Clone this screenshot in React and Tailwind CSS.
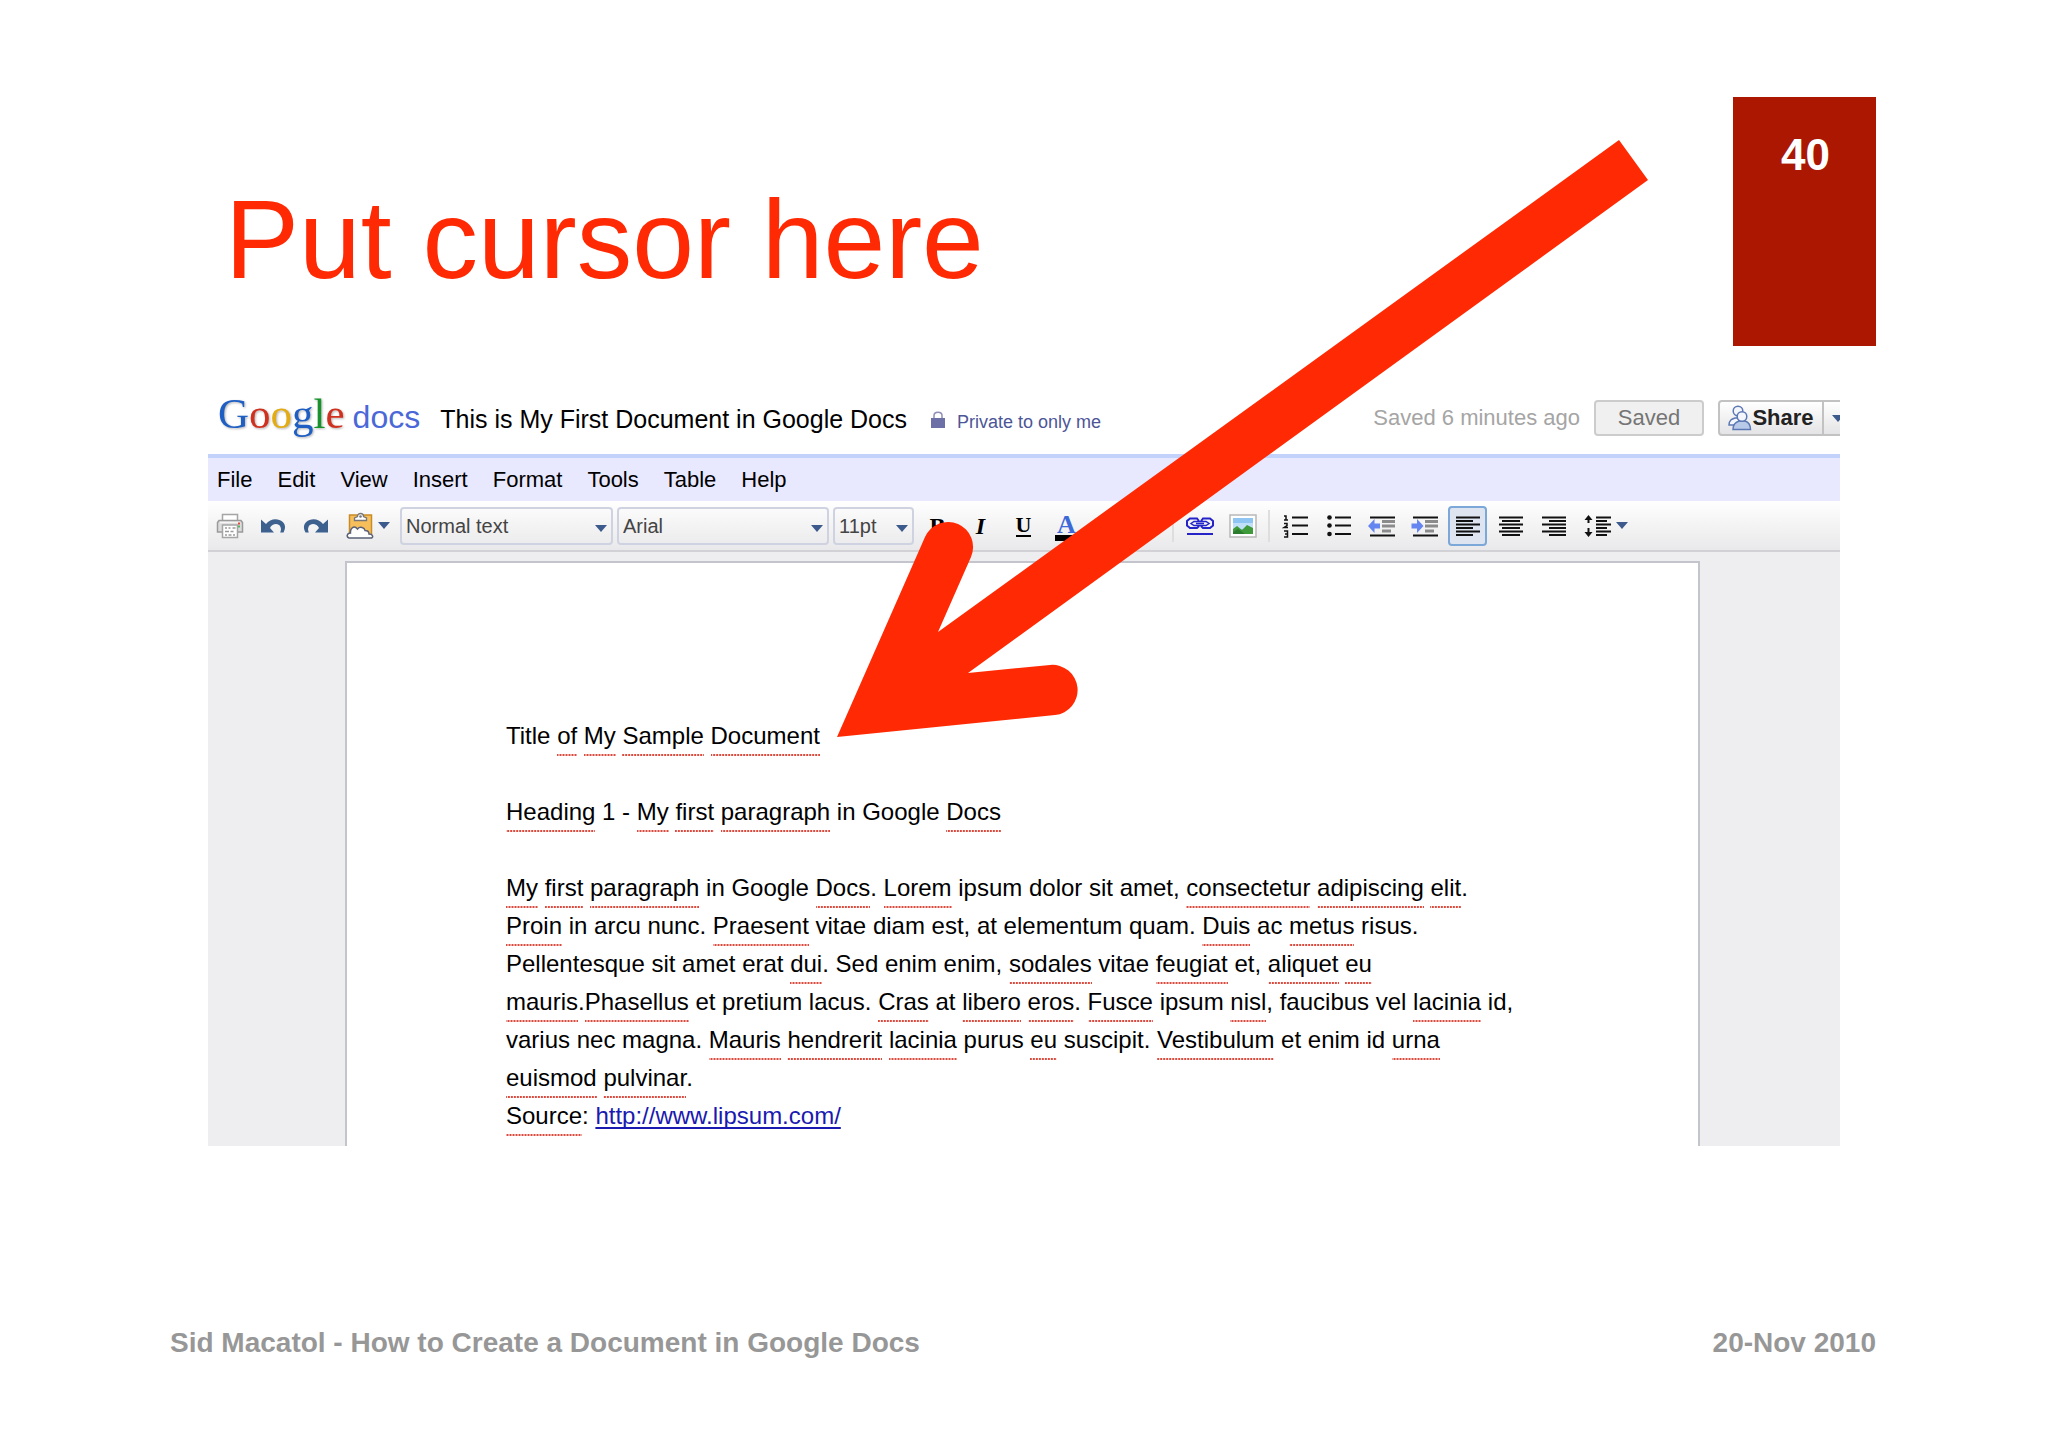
import React, { useState } from "react";

const MENUS = ["File", "Edit", "View", "Insert", "Format", "Tools", "Table", "Help"];

const LOGO = [
  ["G", "text-[#1f5fc4]"],
  ["o", "text-[#d0311f]"],
  ["o", "text-[#e3ac14]"],
  ["g", "text-[#1f5fc4]"],
  ["l", "text-[#17922c]"],
  ["e", "text-[#d0311f]"],
];

// Words wrapped in asterisks are flagged by the spell checker.
const LINES = [
  "Title *of* *My* *Sample* *Document*",
  "",
  "*Heading* 1 - *My* *first* *paragraph* in Google *Docs*",
  "",
  "*My* *first* *paragraph* in Google *Docs*. *Lorem* ipsum dolor sit amet, *consectetur* *adipiscing* *elit*.",
  "*Proin* in arcu nunc. *Praesent* vitae diam est, at elementum quam. *Duis* ac *metus* risus.",
  "Pellentesque sit amet erat *dui*. Sed enim enim, *sodales* vitae *feugiat* et, *aliquet* *eu*",
  "*mauris*.*Phasellus* et pretium lacus. *Cras* at *libero* *eros*. *Fusce* ipsum *nisl*, faucibus vel *lacinia* id,",
  "varius nec magna. *Mauris* *hendrerit* *lacinia* purus *eu* suscipit. *Vestibulum* et enim id *urna*",
  "*euismod* *pulvinar*.",
];

const Flagged = ({ children }) => (
  <span className="bg-[linear-gradient(90deg,#dc4a3e_2px,transparent_2px)] bg-[length:3px_2px] bg-bottom bg-repeat-x pb-[7px]">
    {children}
  </span>
);

const Line = ({ text }) => (
  <p className="h-[38px] whitespace-nowrap">
    {text.split("*").map((part, i) =>
      i % 2 === 1 ? <Flagged key={i}>{part}</Flagged> : part
    )}
  </p>
);

const Caret = ({ className = "" }) => (
  <svg viewBox="0 0 12 7" className={`h-[7px] w-3 shrink-0 ${className}`} fill="#3d5a8c" aria-hidden="true">
    <path d="M0 0h12L6 7z" />
  </svg>
);

const Icon = ({ children }) => (
  <svg viewBox="0 0 28 28" className="h-7 w-7 shrink-0" fill="none" aria-hidden="true">
    {children}
  </svg>
);

const PrintIcon = () => (
  <Icon>
    <path d="M6.500 9V2.500h15V9" fill="#fff" stroke="#a5a5a5" strokeWidth="1.500" />
    <path d="M3 8.500h22l1.500 2V20h-25v-9.500z" fill="#dcdcdc" stroke="#9a9a9a" strokeWidth="1.500" />
    <path d="M4 10.500h20" stroke="#f5f5f5" strokeWidth="1.500" />
    <path d="M6.500 13h15v12.500h-15z" fill="#fff" stroke="#a5a5a5" strokeWidth="1.500" />
    <path d="M9 16h2m1.500 0h2m2 0h3M9 19.500h4m1.500 0h3M9 23h2m1.500 0h3m1.500 0h2" stroke="#9a9a9a" strokeWidth="1.500" />
    <path d="M22 10.500h2v2h-2z" fill="#e0483c" />
    <path d="M22 13.500h2v2h-2z" fill="#55b868" />
  </Icon>
);

const UndoIcon = ({ flip }) => (
  <Icon>
    <g transform={flip ? "translate(28 0) scale(-1 1)" : undefined}>
      <path d="M2 7.500v13h13l-4-4.500C13 11.500 19.500 10.500 21.500 15c.8 2 .5 3.500-.3 5.500h3.300c2.500-4.500 1.800-8-.7-10.500C19 5.500 11 6.500 7 12z" fill="#3d618f" />
    </g>
  </Icon>
);

const ClipboardIcon = () => (
  <Icon>
    <path d="M3.500 3h22v22h-22z" fill="#f6bf5c" stroke="#c98b25" strokeWidth="1.500" />
    <path d="M8.500 8.500V6l3-1.500c0-4 6-4 6 0l3 1.500v2.500z" fill="#fff" stroke="#777" strokeWidth="1.300" />
    <circle cx="14.500" cy="4.500" r="1.300" fill="#777" />
    <path d="M3 26c-3-1-2-5 1.500-5C4 16 8 13 11.500 17c2.500-3 7-1.500 7.500 1.500 3 0 4 2 4 3.500 4 0 4.500 3.500 2.500 4z" fill="#fff" stroke="#5a6078" strokeWidth="1.500" />
  </Icon>
);

const LinkIcon = () => (
  <Icon>
    <path d="M12.500 10V8.500L11 6.500H4L1 9v4.500L4 16h7l1.500-1.500V13M15.500 10V8.500L17 6.500h7L27 9v4.500L24 16h-7l-1.500-1.500V13" stroke="#2424c8" strokeWidth="2" />
    <path d="M5 11.500l3-2h12l3 2-3 2H8zM10 11.500h8" stroke="#2424c8" strokeWidth="1.500" />
    <path d="M1 22h26" stroke="#2424c8" strokeWidth="2" />
  </Icon>
);

const ImageIcon = () => (
  <Icon>
    <path d="M1 3h26v22H1z" fill="#fff" stroke="#b8b8b8" strokeWidth="1.500" />
    <path d="M4 6h20v16H4z" fill="#8ec5f2" />
    <path d="M4 11h20v6H4z" fill="#bfe0f8" />
    <path d="M4 22v-5l4-3 5 4 5-5 6 3v6z" fill="#3f9a3a" />
    <path d="M4 22v-2l5-3 7 5z" fill="#2c7c2d" />
  </Icon>
);

const NumberedIcon = () => (
  <Icon>
    <path d="M10 5.500h16M10 13.500h16M10 22h16" stroke="#111" strokeWidth="2" />
    <path d="M2 4h2v4M2 8h4M2 11.500h3v2l-3 2h4M2 19h3.500v6H2m1-3h2" stroke="#111" strokeWidth="1.500" />
  </Icon>
);

const BulletIcon = () => (
  <Icon>
    <path d="M10 5.500h16M10 13.500h16M10 22h16" stroke="#111" strokeWidth="2" />
    <g fill="#111">
      <circle cx="4.500" cy="5.500" r="2.300" />
      <circle cx="4.500" cy="13.500" r="2.300" />
      <circle cx="4.500" cy="22" r="2.300" />
    </g>
  </Icon>
);

const IndentIcon = ({ out }) => (
  <Icon>
    <path d="M2 5.500h25M2 23.500h25" stroke="#111" strokeWidth="2" />
    <path d="M14 9.500h13M14 14h13M14 19h9" stroke="#8b8b8b" strokeWidth="3" />
    <path
      d={out ? "M0 14l6.500-7v4.500H12v5H6.500V21z" : "M12.500 14L6 7v4.500H.5v5H6V21z"}
      fill="#6585f0"
    />
  </Icon>
);

const AlignIcon = ({ side }) => {
  const paths = {
    left: "M2 5.500h24M2 9h17M2 12.500h24M2 16h17M2 19.500h24M2 23h17",
    center: "M2 5.500h24M5 9h18M2 12.500h24M5 16h18M2 19.500h24M5 23h18",
    right: "M2 5.500h24M9 9h17M2 12.500h24M9 16h17M2 19.500h24M9 23h17",
  };
  return (
    <Icon>
      <path d={paths[side]} stroke="#111" strokeWidth="2" />
    </Icon>
  );
};

const SpacingIcon = () => (
  <Icon>
    <path d="M12 5.500h15M12 9h11M12 12.500h15M12 16h11M12 19.500h15M12 23h11" stroke="#111" strokeWidth="2" />
    <path d="M4.500 6v5M4.500 16v6" stroke="#111" strokeWidth="2" />
    <path d="M4.500 3L8.500 8h-8zM4.500 25L8.500 20h-8z" fill="#111" />
  </Icon>
);

const PeopleIcon = () => (
  <svg viewBox="0 0 24 26" className="h-[26px] w-6 shrink-0" fill="#f3f6fc" stroke="#5c78b4" strokeWidth="1.500" aria-hidden="true">
    <path d="M1 20c0-5 3-6 6-7h4v7z" />
    <circle cx="10" cy="6" r="4.800" />
    <path d="M5 24.500c0-6 3-7.500 6-8.500h6c3 1 5.500 3 5.500 8.500z" fill="#b9c9e8" />
    <circle cx="14" cy="11.500" r="4.800" />
  </svg>
);

const LockIcon = () => (
  <svg viewBox="0 0 14 17" className="h-[17px] w-3.5 shrink-0" aria-hidden="true">
    <path d="M3 8V4.500C3 0 11 0 11 4.500V8" fill="none" stroke="#8d8fb5" strokeWidth="1.500" />
    <path d="M0 7h14v10H0z" fill="#6d70a6" />
  </svg>
);

const ToolButton = ({ label, active, wide, onClick, children }) => (
  <button
    type="button"
    aria-label={label}
    aria-pressed={active}
    onClick={onClick}
    className={`flex h-10 shrink-0 items-center rounded-sm ${
      wide ? "w-[51px] justify-end gap-1" : "w-[39px] justify-center"
    } ${active ? "border-2 border-[#7ba7d9] bg-[#dfe5f0]" : ""}`}
  >
    {children}
  </button>
);

const ToolSelect = ({ label, options, className }) => (
  <div className={`relative shrink-0 ${className}`}>
    <select
      aria-label={label}
      className="h-[38px] w-full appearance-none rounded-sm border-2 border-[#cfd2e0] bg-transparent px-1 text-[20px] text-[#444]"
    >
      {options.map((option) => (
        <option key={option}>{option}</option>
      ))}
    </select>
    <Caret className="pointer-events-none absolute top-[18px] right-1.5" />
  </div>
);

const Separator = ({ className = "" }) => (
  <div className={`h-8 w-1 shrink-0 border-l-2 border-[#dedede] ${className}`} />
);

const Toolbar = () => {
  const [align, setAlign] = useState("left");

  return (
    <div className="flex h-[51px] items-center gap-1 border-b-2 border-[#d2d2d6] bg-linear-to-b from-white to-[#e9e8ea] pl-0.5">
      <ToolButton label="Print"><PrintIcon /></ToolButton>
      <ToolButton label="Undo"><UndoIcon /></ToolButton>
      <ToolButton label="Redo"><UndoIcon flip /></ToolButton>
      <ToolButton label="Web clipboard" wide>
        <ClipboardIcon />
        <Caret />
      </ToolButton>
      <ToolSelect label="Style" options={["Normal text", "Heading 1"]} className="ml-1.5 w-[213px]" />
      <ToolSelect label="Font" options={["Arial", "Georgia"]} className="w-[212px]" />
      <ToolSelect label="Font size" options={["11pt", "12pt"]} className="w-[81px]" />
      <ToolButton label="Bold">
        <span className="font-['Liberation_Serif',serif] text-[24px] font-bold">B</span>
      </ToolButton>
      <ToolButton label="Italic">
        <span className="font-['Liberation_Serif',serif] text-[24px] font-bold italic">I</span>
      </ToolButton>
      <ToolButton label="Underline">
        <span className="border-b-2 border-black font-['Liberation_Serif',serif] text-[22px] leading-5 font-bold">U</span>
      </ToolButton>
      <ToolButton label="Text color">
        <span className="border-b-6 border-black px-0.5 pt-1 font-['Liberation_Serif',serif] text-[26px] leading-5 font-bold text-[#3d68d8]">A</span>
      </ToolButton>
      <Separator className="ml-[82px]" />
      <ToolButton label="Insert link"><LinkIcon /></ToolButton>
      <ToolButton label="Insert image"><ImageIcon /></ToolButton>
      <Separator className="ml-0.5" />
      <ToolButton label="Numbered list"><NumberedIcon /></ToolButton>
      <ToolButton label="Bulleted list"><BulletIcon /></ToolButton>
      <ToolButton label="Decrease indent"><IndentIcon out /></ToolButton>
      <ToolButton label="Increase indent"><IndentIcon /></ToolButton>
      {["left", "center", "right"].map((side) => (
        <ToolButton
          key={side}
          label={`Align ${side}`}
          active={align === side}
          onClick={() => setAlign(side)}
        >
          <AlignIcon side={side} />
        </ToolButton>
      ))}
      <ToolButton label="Line spacing" wide>
        <SpacingIcon />
        <Caret />
      </ToolButton>
    </div>
  );
};

const DocsHeader = () => (
  <div className="flex h-[72px] items-center justify-between pl-2.5">
    <div className="flex items-baseline pb-1.5 whitespace-nowrap">
      <span className="font-['Liberation_Serif',serif] text-[43px] leading-none drop-shadow-[1px_1px_1px_rgba(0,0,0,0.3)]">
        {LOGO.map(([letter, color], i) => (
          <span key={i} className={color}>{letter}</span>
        ))}
      </span>
      <span className="ml-2 text-[32px] leading-none text-[#4a68d8]">docs</span>
      <h2 className="ml-5 text-[25px] text-black">This is My First Document in Google Docs</h2>
      <span className="ml-6 flex items-baseline gap-3 text-[18px] text-[#4c5597]">
        <LockIcon />
        Private to only me
      </span>
    </div>
    <div className="flex items-center text-[22px] leading-none whitespace-nowrap">
      <span className="mr-3.5 text-[#a5a5a5]">Saved 6 minutes ago</span>
      <button type="button" className="mr-3.5 h-9 w-[110px] rounded-sm border-2 border-[#cccccc] bg-[#f0f0f0] text-[#757575]">
        Saved
      </button>
      <button
        type="button"
        className="flex h-9 w-[106px] items-center justify-center rounded-l-sm border-2 border-[#c2c2c2] bg-linear-to-b from-white to-[#e4e4e6] font-bold text-[#222]"
      >
        <PeopleIcon />
        Share
      </button>
      <button
        type="button"
        aria-label="Share options"
        className="flex h-9 w-4 items-center overflow-hidden border-y-2 border-[#c2c2c2] bg-linear-to-b from-white to-[#e4e4e6] pl-2"
      >
        <Caret />
      </button>
    </div>
  </div>
);

const DocsWindow = () => (
  <section className="overflow-hidden">
    <DocsHeader />
    <nav className="flex h-[47px] items-center gap-[25px] border-t-4 border-[#c3d2fb] bg-[#e8e9fe] pl-[9px] text-[22px] text-black">
      {MENUS.map((menu) => (
        <button key={menu} type="button">{menu}</button>
      ))}
    </nav>
    <Toolbar />
    <div className="bg-[#eeedf0] pt-[9px] pr-[140px] pl-[137px]">
      <article className="border-2 border-b-0 border-[#c4c4cc] bg-white pt-[154px] pb-[11px] pl-[159px] text-[24px] leading-[38px] text-black">
        {LINES.map((line, i) => (
          <Line key={i} text={line} />
        ))}
        <p className="h-[38px]">
          <Flagged>Source</Flagged>:{" "}
          <a href="http://www.lipsum.com/" className="text-[#1a1ab0] underline decoration-2 underline-offset-3 [text-decoration-skip-ink:none]">
            http://www.lipsum.com/
          </a>
        </p>
      </article>
    </div>
  </section>
);

const Arrow = () => (
  <svg viewBox="0 0 2048 1447" className="pointer-events-none absolute inset-x-0 top-0 w-full" aria-hidden="true">
    <path
      d="M837 737L925 537A25 25 0 0 1 971 557L938 632L1619 140L1648 180L968 673L1050 665A25 25 0 0 1 1055 715Z"
      fill="#ff2a04"
    />
  </svg>
);

const App = () => (
  <main className="relative flex min-h-screen flex-col overflow-hidden bg-white pt-[97px] pb-[88px] font-['Liberation_Sans',Arial,sans-serif]">
    <header className="flex justify-between pr-[172px] pl-[225px]">
      <h1 className="pt-[88px] text-[111px] leading-none text-[#ff2a04]">Put cursor here</h1>
      <div className="h-[249px] w-[143px] bg-[#ab1700] pt-8 pr-[46px] text-right text-[44px] leading-[52px] font-bold text-white">
        40
      </div>
    </header>
    <div className="mt-9 pr-52 pl-52">
      <DocsWindow />
    </div>
    <footer className="mt-auto flex justify-between pr-[172px] pl-[170px] text-[28px] leading-8 font-bold text-[#979797]">
      <span>Sid Macatol - How to Create a Document in Google Docs</span>
      <span>20-Nov 2010</span>
    </footer>
    <Arrow />
  </main>
);

export default App;
